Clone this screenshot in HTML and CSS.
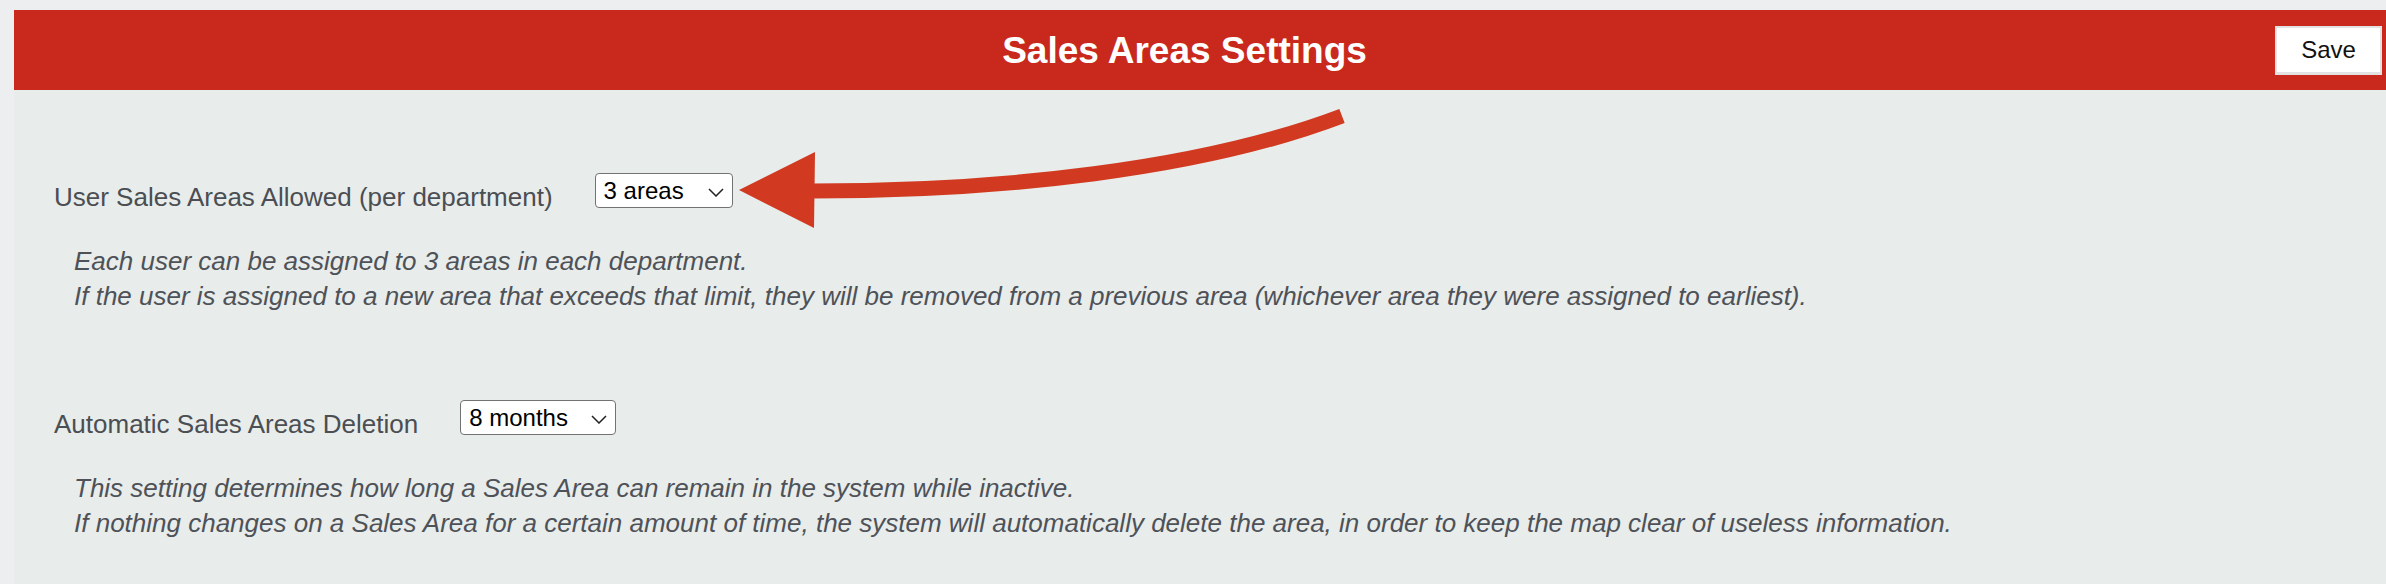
FILE: index.html
```html
<!DOCTYPE html>
<html lang="en">
<head>
<meta charset="utf-8">
<title>Sales Areas Settings</title>
<link rel="stylesheet" href="styles.css">
</head>
<body>
<div class="page">
  <header class="topbar">
    <h1 class="topbar-title">Sales Areas Settings</h1>
    <button class="save-btn" type="button">Save</button>
  </header>

  <main class="settings">
    <section class="setting">
      <div class="setting-row">
        <label class="setting-label" for="areas-allowed">User Sales Areas Allowed (per department)</label>
        <span class="select-wrap">
          <select id="areas-allowed" class="select select-areas">
            <option>1 area</option>
            <option>2 areas</option>
            <option selected>3 areas</option>
            <option>4 areas</option>
            <option>5 areas</option>
          </select>
          <svg class="chevron" width="16" height="9" viewBox="0 0 16 9" aria-hidden="true"><path d="M1 1 L8 8 L15 1" fill="none" stroke="#222" stroke-width="1.5"/></svg>
        </span>
      </div>
      <div class="setting-help">
        <p>Each user can be assigned to 3 areas in each department.</p>
        <p>If the user is assigned to a new area that exceeds that limit, they will be removed from a previous area (whichever area they were assigned to earliest).</p>
      </div>
    </section>

    <section class="setting">
      <div class="setting-row">
        <label class="setting-label" for="auto-delete">Automatic Sales Areas Deletion</label>
        <span class="select-wrap">
          <select id="auto-delete" class="select select-months">
            <option>3 months</option>
            <option>6 months</option>
            <option selected>8 months</option>
            <option>12 months</option>
          </select>
          <svg class="chevron" width="16" height="9" viewBox="0 0 16 9" aria-hidden="true"><path d="M1 1 L8 8 L15 1" fill="none" stroke="#222" stroke-width="1.5"/></svg>
        </span>
      </div>
      <div class="setting-help">
        <p>This setting determines how long a Sales Area can remain in the system while inactive.</p>
        <p>If nothing changes on a Sales Area for a certain amount of time, the system will automatically delete the area, in order to keep the map clear of useless information.</p>
      </div>
    </section>
  </main>
</div>

<!-- callout arrow pointing at the areas dropdown -->
<svg class="callout" width="2386" height="584" viewBox="0 0 2386 584" aria-hidden="true">
  <path d="M812 191 C 1000 191, 1200 170, 1342 116" fill="none" stroke="#d13a21" stroke-width="15"/>
  <polygon points="739,190 815,152 814,228" fill="#d13a21"/>
</svg>
</body>
</html>
```

FILE: styles.css
```css
html, body {
  margin: 0;
  padding: 0;
}

body {
  background: #eceef0;
  font-family: "Liberation Sans", Arial, Helvetica, sans-serif;
  position: relative;
  min-height: 584px;
}

.page {
  margin: 10px 0 0 14px;
  background: #e8ecea;
  min-height: 574px;
}

/* red title bar */
.topbar {
  height: 80px;
  background: #c9291d;
  display: grid;
  grid-template-columns: 1fr auto 1fr;
  align-items: center;
}

.topbar-title {
  grid-column: 2;
  margin: 0;
  padding-right: 31px;
  color: #ffffff;
  font-size: 37px;
  font-weight: bold;
  line-height: 1;
  white-space: nowrap;
}

.save-btn {
  grid-column: 3;
  justify-self: end;
  margin-right: 4px;
  width: 107px;
  height: 49px;
  background: #ffffff;
  border: 2px solid #e2e2e2;
  border-bottom-width: 3px;
  border-radius: 0;
  color: #111111;
  font-family: "Liberation Sans", Arial, sans-serif;
  font-size: 24px;
  padding: 0;
}

/* settings list */
.settings {
  padding: 83px 0 0 40px;
}

.setting + .setting {
  margin-top: 86px;
}

.setting-row {
  display: flex;
  align-items: flex-start;
  gap: 42px;
}

.setting-label {
  padding-top: 7px;
  font-size: 26px;
  line-height: 35px;
  color: #4b4e53;
}

.select-wrap {
  position: relative;
  display: inline-block;
}

.select {
  -webkit-appearance: none;
  appearance: none;
  display: block;
  height: 35px;
  margin: 0;
  padding: 0 30px 0 8px;
  background: #ffffff;
  border: 1.5px solid #727272;
  border-radius: 4px;
  color: #000000;
  font-family: "Liberation Sans", Arial, sans-serif;
  font-size: 24px;
  line-height: 32px;
}

.select-areas {
  width: 138px;
}

.select-months {
  width: 156px;
}

.chevron {
  position: absolute;
  right: 9px;
  top: 15px;
  pointer-events: none;
}

.setting-help {
  margin-top: 29px;
  padding-left: 20px;
  font-size: 26px;
  font-style: italic;
  line-height: 35px;
  color: #4e5258;
}

.setting-help p {
  margin: 0;
}

/* annotation layer */
.callout {
  position: absolute;
  left: 0;
  top: 0;
  pointer-events: none;
}
```
